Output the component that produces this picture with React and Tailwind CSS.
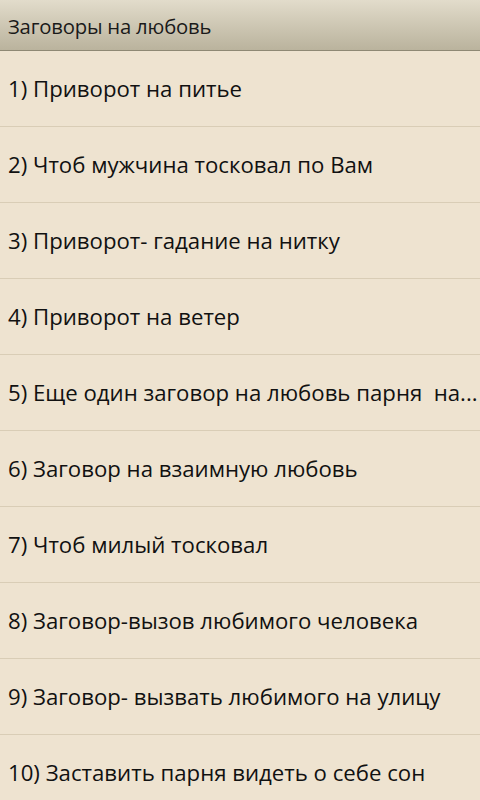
import React from "react";

const items = [
  "1) Приворот на питье",
  "2) Чтоб мужчина тосковал по Вам",
  "3) Приворот- гадание на нитку",
  "4) Приворот на ветер",
  "5) Еще один заговор на любовь парня  на...",
  "6) Заговор на взаимную любовь",
  "7) Чтоб милый тосковал",
  "8) Заговор-вызов любимого человека",
  "9) Заговор- вызвать любимого на улицу",
  "10) Заставить парня видеть о себе сон",
];

export default function App() {
  return (
    <div
      className="w-[480px] h-[800px] overflow-hidden bg-[#eee3d0] flex flex-col"
      style={{ fontFamily: '"Open Sans", "Noto Sans", sans-serif' }}
    >
      <div className="h-[51px] shrink-0 flex items-center pl-2 pt-[2px] bg-gradient-to-b from-[#e2dccb] to-[#bab39d] border-b border-[#8e8874] text-[20.3px] text-[#1a1a1a] tracking-[-0.2px]">
        Заговоры на любовь
      </div>
      <div className="flex flex-col">
        {items.map((t, i) => (
          <div
            key={i}
            className="h-[76px] shrink-0 flex items-center pl-2 border-b border-[#d9cdb6] text-[22.2px] text-[#111] whitespace-pre"
          >
            {t}
          </div>
        ))}
      </div>
    </div>
  );
}
